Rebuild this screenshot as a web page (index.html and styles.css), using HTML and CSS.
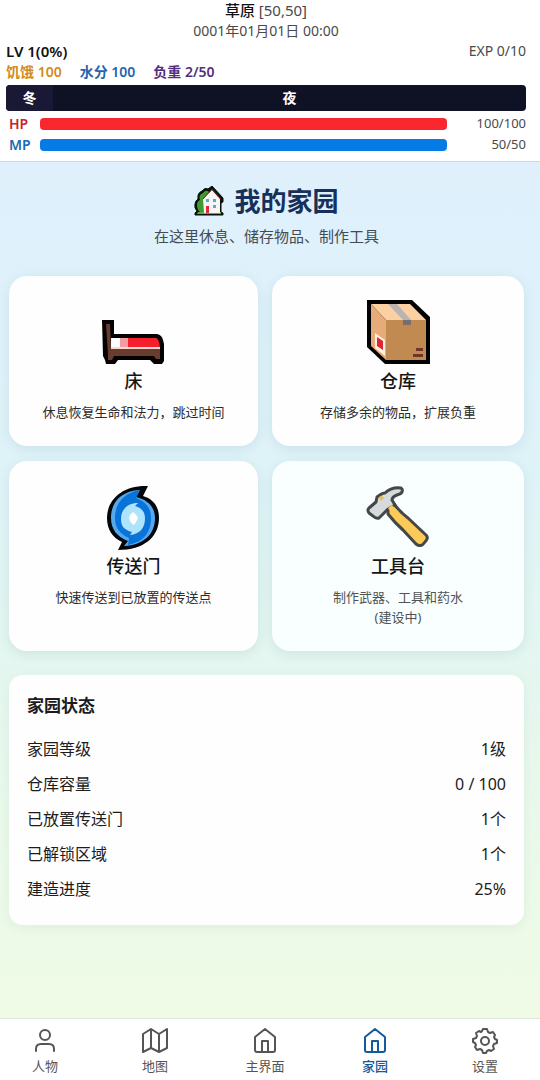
FILE: index.html
```html
<!DOCTYPE html>
<html lang="zh-CN">
<head>
<meta charset="utf-8">
<meta name="viewport" content="width=device-width, initial-scale=1">
<title>我的家园</title>
<link rel="stylesheet" href="styles.css">
</head>
<body>
<header class="status-bar">
  <div class="location"><strong>草原</strong> [50,50]</div>
  <div class="date">0001年01月01日 00:00</div>
  <div class="level-row"><strong class="level">LV 1(0%)</strong><span class="exp">EXP 0/10</span></div>
  <div class="needs">
    <span class="hunger">饥饿 100</span>
    <span class="water">水分 100</span>
    <span class="load">负重 2/50</span>
  </div>
  <div class="season-bar"><span class="season">冬</span><span class="phase">夜</span></div>
  <div class="vital"><span class="vital-name hp">HP</span><span class="vital-track hp-fill"></span><span class="vital-value">100/100</span></div>
  <div class="vital"><span class="vital-name mp">MP</span><span class="vital-track mp-fill"></span><span class="vital-value">50/50</span></div>
</header>

<main class="home">
  <h1 class="home-title">
    <svg class="house" viewBox="0 0 30 30" aria-hidden="true">
      <path d="M1 29V27L3 25Q0 22 1 18Q1 15 4 13Q3 7 8 5Q11 1 14 3L18 0L29 12V16L27 17V26L29 27V29Z" fill="#06120c" stroke="#06120c" stroke-linejoin="round"/>
      <path d="M3 19Q3 15 6 14Q4 9 9 7Q12 3 15 6V26H6Q3 24 3 19Z" fill="#3f9a2f"/>
      <path d="M4 26H27V28H3Z" fill="#62ad38"/>
      <path d="M9 13L18 4L26 13V27H10Z" fill="#f8f5f2"/>
      <path d="M9 13L18 3L27 13" fill="none" stroke="#6e1824" stroke-width="1"/>
      <path d="M12 13h3v3h-3zM19 13h3v3h-3zM19 19h3v3h-3z" fill="#4caee0"/>
      <path d="M12 20h3v7h-3z" fill="#e32b37"/>
    </svg>
    我的家园
  </h1>
  <p class="home-subtitle">在这里休息、储存物品、制作工具</p>

  <div class="facilities">
    <button class="card" type="button">
      <svg class="card-icon" viewBox="0 0 64 64" aria-hidden="true">
        <path d="M0 20H12V34H55Q60 35 61 40L62 44V61L60 64H52L48 60H16L13 64H4L3 60L1 56Z" fill="#060202"/>
        <path d="M4 24H8L9 49H58V59H54L52 56H12L10 60H6V55Z" fill="#683d30"/>
        <path d="M9 38H18V48H9Z" fill="#fff"/>
        <path d="M18 38H26V48H18Z" fill="#f39aa3"/>
        <path d="M26 38H54Q57 38 58 48H26Z" fill="#f51f2e"/>
        <path d="M9 47H58V49H9Z" fill="#fbd9cf"/>
      </svg>
      <span class="card-title">床</span>
      <span class="card-text">休息恢复生命和法力，跳过时间</span>
    </button>
    <button class="card" type="button">
      <svg class="card-icon" viewBox="0 0 64 64" aria-hidden="true">
        <path d="M1 0H46L64 17V64H19L1 47Z" fill="#030202"/>
        <path d="M5 4H44L60 20H20Z" fill="#fbd0a2"/>
        <path d="M5 4L20 20V60L5 46Z" fill="#e7aa79"/>
        <path d="M20 20H60V60H20Z" fill="#c18a50"/>
        <path d="M22 4H31L45 20H37Z" fill="#b9b4b1"/>
        <path d="M37 20H45V25H37Z" fill="#76706c"/>
        <path d="M9 33L19 40V56L9 48Z" fill="#fff0df"/>
        <path d="M11 37L17 41V50L11 46Z" fill="#dc2638"/>
        <path d="M50 48H57V51H50ZM47 54H57V57H47Z" fill="#6e3726"/>
      </svg>
      <span class="card-title">仓库</span>
      <span class="card-text">存储多余的物品，扩展负重</span>
    </button>
    <button class="card" type="button">
      <svg class="card-icon" viewBox="0 0 64 64" aria-hidden="true">
        <path d="M46 1C20 0 5 15 5 33C5 45 11 53 20 57L16 65C42 65 57 52 57 33C57 21 51 14 41 11Z" fill="#03060b"/>
        <path d="M38 5C19 6 9 17 9 33C9 44 15 52 26 56L22 61C42 60 53 49 53 33C53 22 46 15 34 12Z" fill="#54a9ec"/>
        <path d="M38 5C22 8 13 18 13 33C13 43 18 49 27 53L26 60C42 57 49 47 49 33C49 23 44 17 34 13Z" fill="#0873d8"/>
        <path d="M36 18C26 18 19 24 19 34C19 41 22 45 30 47L28 50C38 49 43 43 43 33C43 27 40 23 33 21Z" fill="#aee3fc"/>
        <path d="M31 27Q34 29 36 33Q34 38 32 40Q28 38 27 33Q28 29 31 27Z" fill="#fff"/>
      </svg>
      <span class="card-title">传送门</span>
      <span class="card-text">快速传送到已放置的传送点</span>
    </button>
    <button class="card card-locked" type="button" disabled>
      <svg class="card-icon" viewBox="0 0 64 64" aria-hidden="true">
        <path d="M22 23L28 19Q35 28 42 33L60 50Q63 53 59 57Q55 63 50 59L37 45Q29 38 22 29Z" fill="#fcca58" stroke="#444748" stroke-width="3" stroke-linejoin="round"/>
        <path d="M3 23L10 17L11 12Q16 8 19 8Q25 2 35 3Q37 4 36 7Q35 9 31 10Q26 12 26 15L29 20L22 24L19 27L13 33Q10 34 7 31L3 28Q1 25 3 23Z" fill="#d7dadd" stroke="#444748" stroke-width="3" stroke-linejoin="round"/>
        <path d="M22 23L26 20L34 29L30 34Z" fill="#fcca58"/>
        <path d="M13 12L16 11L18 13L15 16Z" fill="#eebc4b"/>
      </svg>
      <span class="card-title">工具台</span>
      <span class="card-text">制作武器、工具和药水<br>(建设中)</span>
    </button>
  </div>

  <section class="summary">
    <h2 class="summary-title">家园状态</h2>
    <dl class="summary-list">
      <div class="summary-row"><dt>家园等级</dt><dd>1级</dd></div>
      <div class="summary-row"><dt>仓库容量</dt><dd>0 / 100</dd></div>
      <div class="summary-row"><dt>已放置传送门</dt><dd>1个</dd></div>
      <div class="summary-row"><dt>已解锁区域</dt><dd>1个</dd></div>
      <div class="summary-row"><dt>建造进度</dt><dd>25%</dd></div>
    </dl>
  </section>
</main>

<nav class="tabs">
  <a class="tab" href="#person">
    <svg class="tab-icon" viewBox="0 0 26 26" aria-hidden="true"><circle cx="13" cy="7" r="5"/><path d="M4 23V21Q4 16 9 16H17Q22 16 22 21V23"/></svg>
    人物</a>
  <a class="tab" href="#map">
    <svg class="tab-icon" viewBox="0 0 26 26" aria-hidden="true"><path d="M1 6L9 1L17 6L25 1V20L17 24L9 20L1 24ZM9 1V20M17 6V24"/></svg>
    地图</a>
  <a class="tab" href="#main">
    <svg class="tab-icon" viewBox="0 0 26 26" aria-hidden="true"><path d="M3 9L13 1L23 9V22Q23 24 21 24H5Q3 24 3 22ZM10 24V13H16V24"/></svg>
    主界面</a>
  <a class="tab tab-active" href="#home" aria-current="page">
    <svg class="tab-icon" viewBox="0 0 26 26" aria-hidden="true"><path d="M3 9L13 1L23 9V22Q23 24 21 24H5Q3 24 3 22ZM10 24V13H16V24"/></svg>
    家园</a>
  <a class="tab" href="#settings">
    <svg class="tab-icon" viewBox="0 0 26 26" aria-hidden="true"><path d="M11 1H15L16 4L18 5L21 4L23 7L22 9L23 11L25 12V15L22 16L21 18L22 21L19 23L17 22L15 23L14 25H11L10 22L8 21L5 22L3 19L4 17L3 15L1 14V11L4 10L5 8L4 5L7 3L9 4L10 3Z"/><circle cx="13" cy="13" r="4"/></svg>
    设置</a>
</nav>
</body>
</html>
```

FILE: styles.css
```css
* {
  box-sizing: border-box;
}

body {
  display: flex;
  flex-direction: column;
  min-height: 100vh;
  margin: 0;
  color: #1c1c1c;
  background: #fff;
  font-family: "Noto Sans", "Noto Sans CJK SC", sans-serif;
  font-size: 14px;
}

.status-bar {
  padding: 0 14px 6px 6px;
  border-bottom: 1px solid #c9dde8;
  line-height: 21px;
}

.location,
.date {
  color: #4a4a4a;
  text-align: center;
}

.location {
  font-size: 15px;
  line-height: 20px;
}

.location strong {
  color: #111;
  font-weight: 500;
}

.level-row {
  display: flex;
  justify-content: space-between;
  color: #111;
  line-height: 20px;
}

.level {
  font-size: 15px;
  font-weight: 600;
}

.exp {
  color: #4a4a4a;
}

.needs {
  display: flex;
  gap: 18px;
  font-weight: 600;
}

.hunger {
  color: #d18b1e;
}

.water {
  color: #1f65ae;
}

.load {
  color: #54307f;
}

.season-bar {
  display: flex;
  height: 26px;
  margin: 3px 0 2px;
  overflow: hidden;
  border-radius: 4px;
  color: #fff;
  background: #0f1124;
  font-weight: 600;
  line-height: 26px;
  text-align: center;
}

.season {
  width: 9%;
  background: #1a1935;
}

.phase {
  flex: 1;
}

.vital {
  display: flex;
  align-items: center;
}

.vital-name {
  width: 34px;
  padding-left: 3px;
  font-weight: 600;
}

.hp {
  color: #c4252e;
}

.mp {
  color: #1769b0;
}

.vital-track {
  flex: 1;
  height: 12px;
  border-radius: 4px;
}

.hp-fill {
  background: #f8282e;
}

.mp-fill {
  background: #067be6;
}

.vital-value {
  width: 79px;
  color: #4a4a4a;
  font-size: 13px;
  text-align: right;
}

.home {
  flex: 1;
  padding: 19px 16px 24px 9px;
  background: linear-gradient(#dff0fc, #def3f8 35%, #e4f7ef 60%, #effbe5);
}

.home-title {
  display: flex;
  justify-content: center;
  align-items: center;
  gap: 10px;
  margin: 0;
  color: #17305a;
  font-size: 26px;
  line-height: 40px;
}

.house {
  width: 30px;
  height: 30px;
}

.home-subtitle {
  margin: 3px 0 28px;
  color: #444c52;
  font-size: 15px;
  line-height: 24px;
  text-align: center;
}

.facilities {
  display: grid;
  grid-template-columns: 249fr 252fr;
  gap: 15px 14px;
}

.card {
  display: flex;
  flex-direction: column;
  align-items: center;
  padding: 24px 8px;
  border: 0;
  border-radius: 18px;
  color: #151515;
  background: #fefefe;
  box-shadow: 0 3px 12px rgba(40, 90, 100, 0.1);
  font: inherit;
}

.card-icon {
  width: 64px;
  height: 64px;
  overflow: visible;
}

.card-title {
  margin: 4px 0 8px;
  font-size: 18px;
  font-weight: 500;
  line-height: 26px;
}

.card-text {
  color: #2b2b2b;
  font-size: 13px;
  line-height: 20px;
}

.card-locked {
  background: #f9fefe;
}

.card-locked .card-text {
  color: #505454;
}

.summary {
  margin-top: 24px;
  padding: 18px;
  border-radius: 14px;
  background: #fefefe;
  box-shadow: 0 3px 12px rgba(40, 90, 60, 0.06);
}

.summary-title {
  margin: 0 0 13px;
  font-size: 17px;
  line-height: 26px;
}

.summary-list {
  margin: 0;
}

.summary-row {
  display: flex;
  justify-content: space-between;
  font-size: 16px;
  line-height: 35px;
}

.summary-row dd {
  margin: 0;
}

.tabs {
  display: flex;
  justify-content: space-between;
  padding: 9px 25px 4px 15px;
  border-top: 1px solid #dfe5dc;
}

.tab {
  display: flex;
  flex-direction: column;
  align-items: center;
  gap: 2px;
  width: 60px;
  color: #555;
  font-size: 13px;
  line-height: 20px;
  text-decoration: none;
}

.tab-active {
  color: #145a9c;
  font-weight: 500;
}

.tab-icon {
  width: 26px;
  height: 26px;
  fill: none;
  stroke: currentColor;
  stroke-width: 2;
  stroke-linejoin: round;
  stroke-linecap: round;
}
```
